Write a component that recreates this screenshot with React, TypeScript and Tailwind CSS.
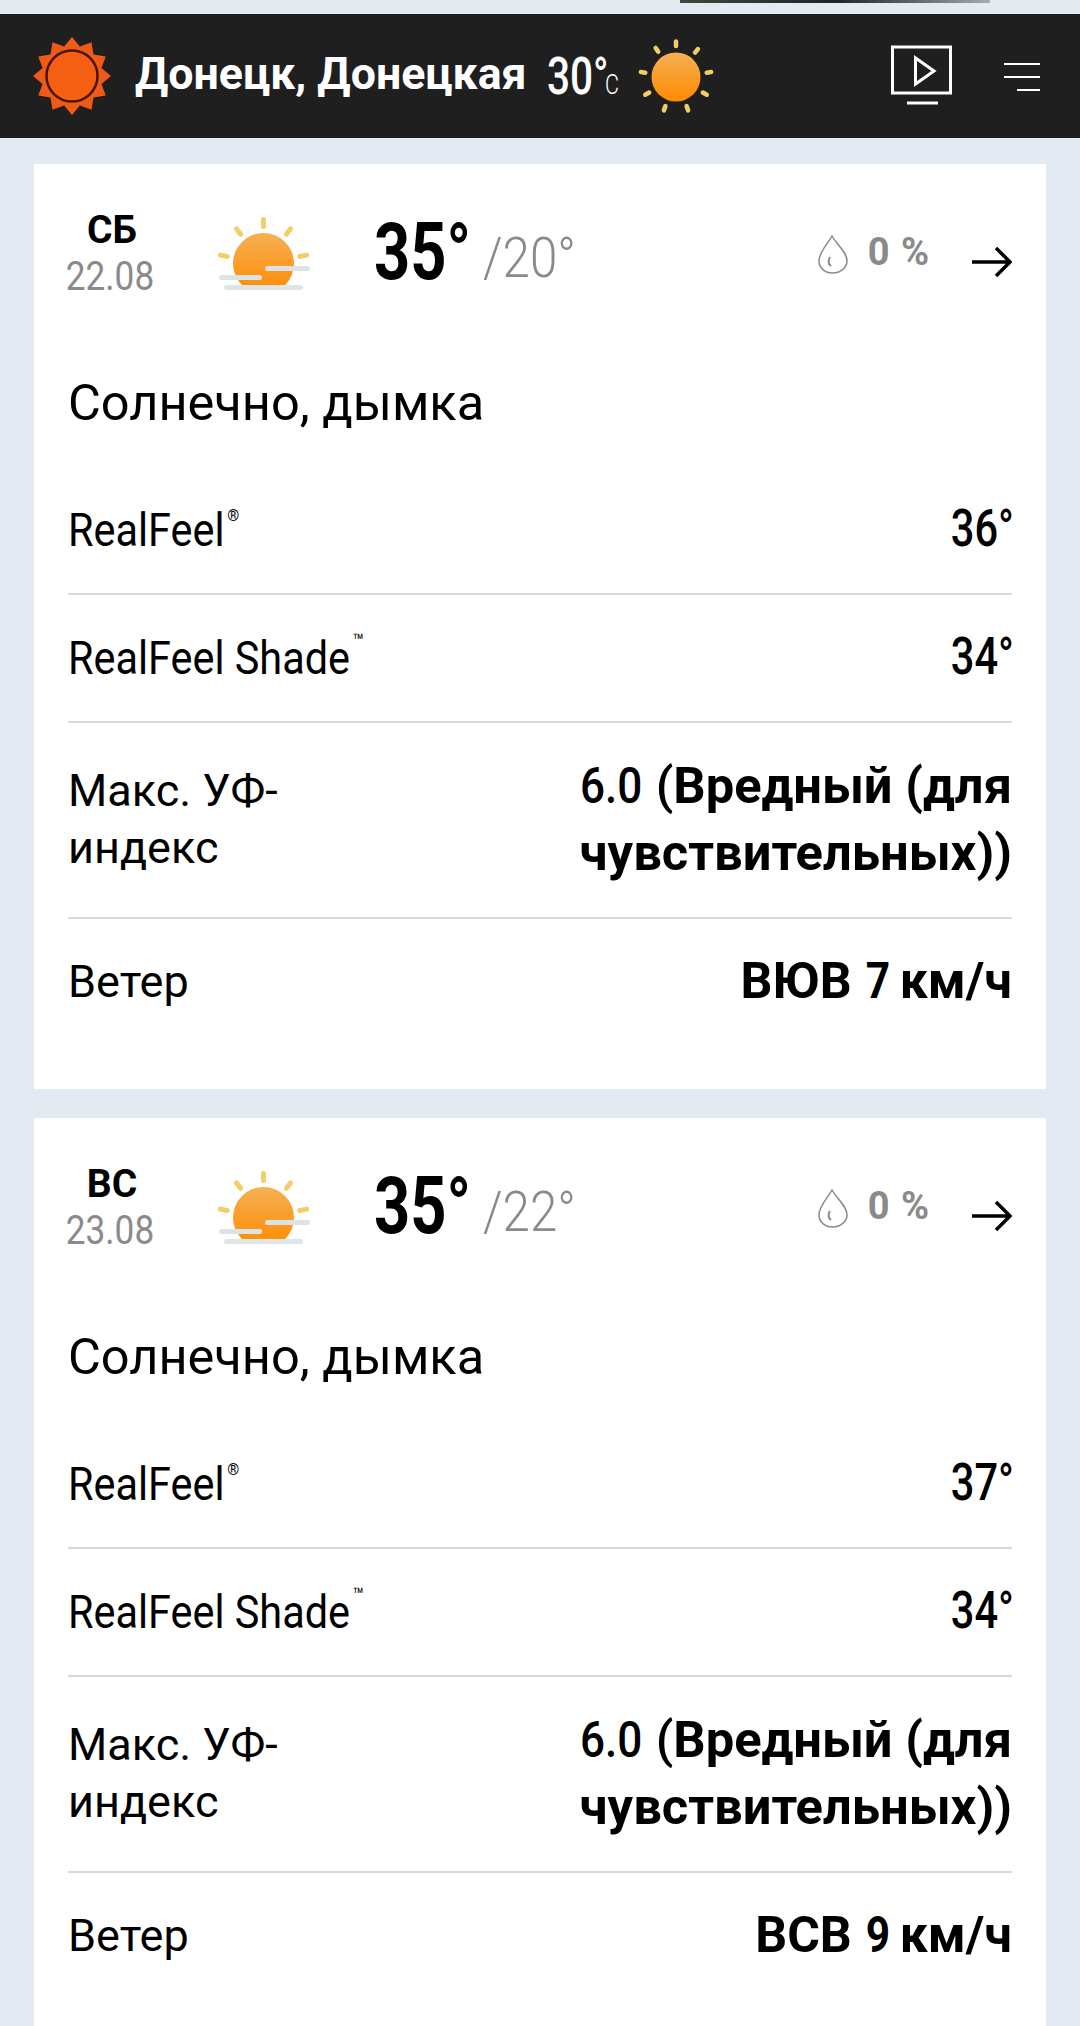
const din = "font-['Roboto',sans-serif]";
const rob = "font-['Roboto',sans-serif]";

const logoPoints = Array.from({ length: 24 }, (_, i) => {
  const r = i % 2 === 0 ? 39 : 30.5;
  const a = (i * Math.PI) / 12 - Math.PI / 2;
  return `${40 + r * Math.cos(a)},${40 + r * Math.sin(a)}`;
}).join(" ");

function Logo() {
  return (
    <svg width="80" height="80" viewBox="0 0 80 80" className="shrink-0">
      <polygon points={logoPoints} fill="#ee5a18" />
      <circle cx="40" cy="40" r="25.500" fill="#f55f14" stroke="#4a1408" strokeWidth="2.500" />
    </svg>
  );
}

function Rays({ angles, cx, cy, from, to, w }: { angles: number[]; cx: number; cy: number; from: number; to: number; w: number }) {
  return (
    <>
      {angles.map((a) => (
        <line key={a} x1={cx} y1={cy - from} x2={cx} y2={cy - to} stroke="#f2cf66" strokeWidth={w} strokeLinecap="round" transform={`rotate(${a} ${cx} ${cy})`} />
      ))}
    </>
  );
}

function SunIcon() {
  return (
    <svg width="76" height="76" viewBox="0 0 76 76" className="shrink-0">
      <defs>
        <linearGradient id="sun" x1="0" y1="0" x2="0" y2="1">
          <stop offset="0" stopColor="#f5b054" />
          <stop offset="1" stopColor="#ff8a00" />
        </linearGradient>
      </defs>
      <circle cx="38" cy="38" r="24.500" fill="url(#sun)" />
      <Rays angles={[0, 38, 82, 120, 160, 200, 240, 278, 325]} cx={38} cy={38} from={31} to={35.500} w={4.500} />
    </svg>
  );
}

function HazeIcon({ id }: { id: string }) {
  return (
    <svg width="96" height="84" viewBox="0 0 96 84" className="shrink-0">
      <defs>
        <linearGradient id={`${id}g`} x1="0" y1="0" x2="0" y2="1">
          <stop offset="0" stopColor="#f5b054" />
          <stop offset="1" stopColor="#ff8a00" />
        </linearGradient>
        <clipPath id={`${id}c`}>
          <rect x="0" y="0" width="96" height="71" />
        </clipPath>
      </defs>
      <circle cx="47.500" cy="49.500" r="30.500" fill={`url(#${id}g)`} clipPath={`url(#${id}c)`} />
      <Rays angles={[-79, -38, 0, 38, 79]} cx={47.500} cy={49.500} from={37} to={44} w={5} />
      <rect x="49" y="52" width="45" height="5" rx="2.500" fill="#dde2e4" />
      <rect x="3" y="61" width="43" height="5" rx="2.500" fill="#dde2e4" />
      <rect x="8" y="71" width="79" height="5" rx="2.500" fill="#dde6e6" />
    </svg>
  );
}

function Row({ label, value, last }: { label: React.ReactNode; value: React.ReactNode; last?: boolean }) {
  return (
    <div className={`flex items-center justify-between ${last ? "" : "border-b-2 border-[#d8d8d8]"}`}>
      {label}
      {value}
    </div>
  );
}

function DayCard({ id, day, date, low, rf, rfs, wind }: { id: string; day: string; date: string; low: string; rf: string; rfs: string; wind: string }) {
  const feelCls = `${din} text-[46px] font-normal text-black whitespace-nowrap origin-left scale-x-[0.9] w-[400px] flex items-center`;
  const valCls = `${din} text-[52px] font-medium text-black inline-block origin-right scale-x-[0.8] w-[80px] -mr-[2px] mb-[3px] text-right whitespace-nowrap`;
  const windNum = `${din} font-bold inline-block origin-center scale-x-[0.85] w-[23px] text-center`;
  const [dir, num, unit] = wind.split(" ");
  return (
    <section className="bg-white mx-[34px] px-[34px] pt-[46px] h-[925px] mb-[29px]">
      <div className="flex items-start h-[167px]">
        <div className="w-[88px] text-center">
          <div className={`${rob} text-[39px] leading-[40px] font-bold text-black`}>{day}</div>
          <div className={`${din} -ml-[8px] mt-[5px] text-[40px] leading-[44px] text-[#8a8a8a] scale-x-[0.88] origin-center whitespace-nowrap`}>{date}</div>
        </div>
        <div className="ml-[60px] mt-[4px]"><HazeIcon id={id} /></div>
        <div className={`${din} ml-[62px] mt-[2px] flex items-baseline leading-[80px] whitespace-nowrap`}>
          <span className="text-[80px] font-bold text-black inline-block origin-left scale-x-[0.79] w-[109px]">35°</span>
          <span className="text-[56px] text-[#8a8a8a] font-light inline-block origin-left scale-x-[0.88] w-[100px] -translate-y-[2px]">/{low}</span>
        </div>
        <div className="ml-auto flex items-start">
          <svg width="30" height="40" viewBox="0 0 30 40" className="mt-[25px]" fill="none" stroke="#8a8a8a">
            <path d="M14 1 C9 10 1 17 1 26 C1 33 7 38 14.500 38 C22 38 29 33 29 26 C29 17 19 10 14 1 Z" strokeWidth="1.500" />
            <path d="M12 22 C10 25 10 29 13 31" strokeWidth="2" />
          </svg>
          <span className={`${din} ml-[20px] mt-[16px] text-[38px] leading-[52px] font-bold text-[#8a8a8a] tracking-[1px] whitespace-nowrap`}>0 %</span>
          <svg width="40" height="32" viewBox="0 0 40 32" className="ml-[42px] mt-[36px]" fill="none" stroke="#000" strokeWidth="3.500">
            <path d="M0 16 H38 M24 2 L38 16 L24 30" />
          </svg>
        </div>
      </div>
      <div className={`${rob} text-[50.500px] leading-[56px] text-black h-[92px] -mt-[2px]`}>Солнечно, дымка</div>
      <Row
        label={<span className={`${feelCls} h-[126px]`}>RealFeel<sup className="text-[17px] ml-[3px] -mt-[14px]">®</sup></span>}
        value={<span className={valCls}>{rf}</span>}
      />
      <Row
        label={<span className={`${feelCls} h-[126px]`}>RealFeel Shade<sup className="text-[20px] ml-[3px] -mt-[14px]">™</sup></span>}
        value={<span className={valCls}>{rfs}</span>}
      />
      <Row
        label={<span className={`${rob} text-[45px] leading-[57px] w-[260px] h-[194px] pb-[3px] flex items-center text-black`}>Макс. УФ-индекс</span>}
        value={
          <div className={`${rob} text-[50.700px] leading-[67px] pb-[3px] font-bold text-right text-black whitespace-nowrap`}>
            <span className="inline-block font-medium w-[76px] text-left origin-left scale-x-[0.87]">6.0</span>
            <span className="font-medium">(</span>Вредный (для
            <br />
            чувствительных))
          </div>
        }
      />
      <Row
        last
        label={<span className={`${rob} text-[45px] h-[128px] pb-[3px] flex items-center text-black`}>Ветер</span>}
        value={
          <span className={`${rob} text-[50px] mb-[3px] font-bold text-black whitespace-nowrap`}>
            {dir} <span className={windNum}>{num}</span> {unit}
          </span>
        }
      />
    </section>
  );
}

export default function App() {
  return (
    <div className="bg-[#e4eaf2] h-[2026px] overflow-hidden">
      <div className="h-[14px] flex justify-end pr-[90px]">
        <div className="h-[3px] w-[310px] bg-gradient-to-r from-[#3d4a3a] via-[#20242c] to-[#a9adb2]" />
      </div>
      <header className="h-[124px] bg-[#1f1f1f] flex items-center pl-[32px] pr-[40px] mb-[26px]">
        <Logo />
        <h1 className={`${rob} ml-[23px] mb-[2px] text-[44.700px] font-bold text-white whitespace-nowrap w-[412px]`}>Донецк, Донецкая</h1>
        <div className={`${din} flex items-baseline text-white whitespace-nowrap w-[91px] mt-[2px]`}>
          <span className="text-[52px] font-medium inline-block origin-left scale-x-[0.78] w-[58px]">30°</span>
          <span className="text-[27px] font-light inline-block origin-left scale-x-[0.8]">C</span>
        </div>
        <div className="mt-[2px]"><SunIcon /></div>
        <svg width="62" height="62" viewBox="0 0 62 62" className="ml-auto" fill="none" stroke="#fff">
          <rect x="1.500" y="2" width="58" height="46" strokeWidth="3" />
          <path d="M24.500 13 V39 L43 26 Z" strokeWidth="3" />
          <path d="M16 58 H47" strokeWidth="3" />
        </svg>
        <svg width="36" height="30" viewBox="0 0 36 30" className="ml-[51px] mt-[2px]" stroke="#fff" strokeWidth="2">
          <path d="M0 2 H36 M0 15 H36 M13 28 H36" />
        </svg>
      </header>
      <DayCard id="a" day="СБ" date="22.08" low="20°" rf="36°" rfs="34°" wind="ВЮВ 7 км/ч" />
      <DayCard id="b" day="ВС" date="23.08" low="22°" rf="37°" rfs="34°" wind="ВСВ 9 км/ч" />
    </div>
  );
}
